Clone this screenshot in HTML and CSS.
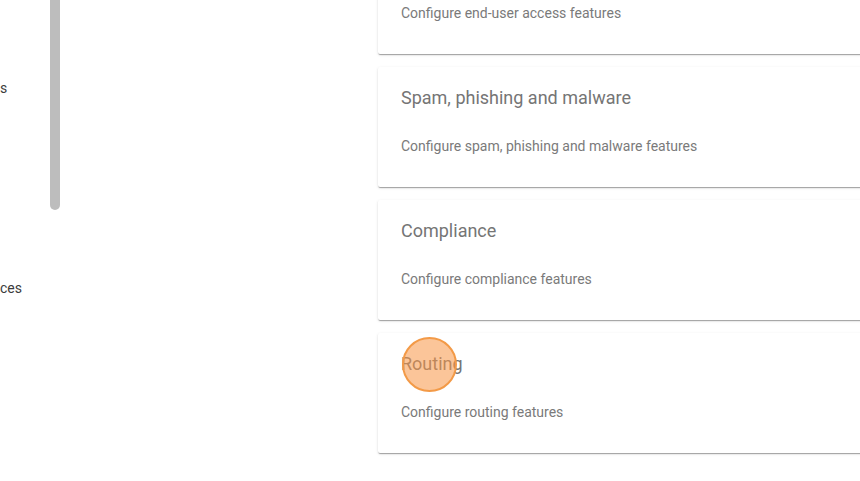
FILE: index.html
```html
<!DOCTYPE html>
<html>
<head>
<meta charset="utf-8">
<link rel="stylesheet" href="styles.css">
</head>
<body>
<div class="page">
  <aside class="sidebar">
    <ul class="nav">
      <li class="nav-item first">s</li>
      <li class="nav-item second">ces</li>
    </ul>
    <div class="scrollbar"></div>
  </aside>
  <main class="content">
    <div class="cards">
      <section class="card">
        <h2 class="card-title">End-user access</h2>
        <p class="card-desc">Configure end-user access features</p>
      </section>
      <section class="card">
        <h2 class="card-title">Spam, phishing and malware</h2>
        <p class="card-desc">Configure spam, phishing and malware features</p>
      </section>
      <section class="card">
        <h2 class="card-title">Compliance</h2>
        <p class="card-desc">Configure compliance features</p>
      </section>
      <section class="card">
        <h2 class="card-title">Routing</h2>
        <p class="card-desc">Configure routing features</p>
        <span class="click-marker"></span>
      </section>
    </div>
  </main>
</div>
</body>
</html>
```
FILE: styles.css
```css
html, body {
  margin: 0;
  padding: 0;
  background: #ffffff;
  overflow: hidden;
  width: 860px;
  height: 481px;
}
body {
  font-family: Roboto, "Liberation Sans", Arial, sans-serif;
}
.page {
  display: flex;
  width: 860px;
  height: 481px;
  overflow: hidden;
}
.sidebar {
  position: relative;
  width: 378px;
  flex: 0 0 378px;
}
.nav {
  list-style: none;
  margin: 0;
  padding: 0;
}
.nav-item {
  font-size: 14px;
  line-height: 20px;
  color: #3c3c3c;
  padding-left: 0;
}
.nav-item.first {
  margin-top: 78px;
}
.nav-item.second {
  margin-top: 180px;
}
.scrollbar {
  position: absolute;
  left: 50px;
  top: 0;
  width: 10px;
  height: 210px;
  background: #bdbdbd;
  border-radius: 0 0 5px 5px;
}
.content {
  flex: 1 1 auto;
  min-width: 0;
}
.cards {
  display: flex;
  flex-direction: column;
  gap: 13px;
  margin-top: -66px;
  width: 640px;
}
.card {
  position: relative;
  background: #fff;
  height: 120px;
  box-sizing: border-box;
  padding: 19px 23px 0 23px;
  box-shadow: 0 2px 1px -1px rgba(0,0,0,.2), 0 1px 1px 0 rgba(0,0,0,.14), 0 1px 3px 0 rgba(0,0,0,.12);
  border-radius: 2px;
}
.card-title {
  margin: 0;
  font-size: 18px;
  line-height: 24px;
  font-weight: 400;
  color: #757575;
}
.card-desc {
  margin: 26px 0 0 0;
  font-size: 14px;
  line-height: 20px;
  color: #7a7a7a;
}
.click-marker {
  position: absolute;
  left: 24px;
  top: 4px;
  width: 51px;
  height: 51px;
  border-radius: 50%;
  border: 2px solid #f39a47;
  background: rgba(247, 150, 70, 0.55);
}
```
